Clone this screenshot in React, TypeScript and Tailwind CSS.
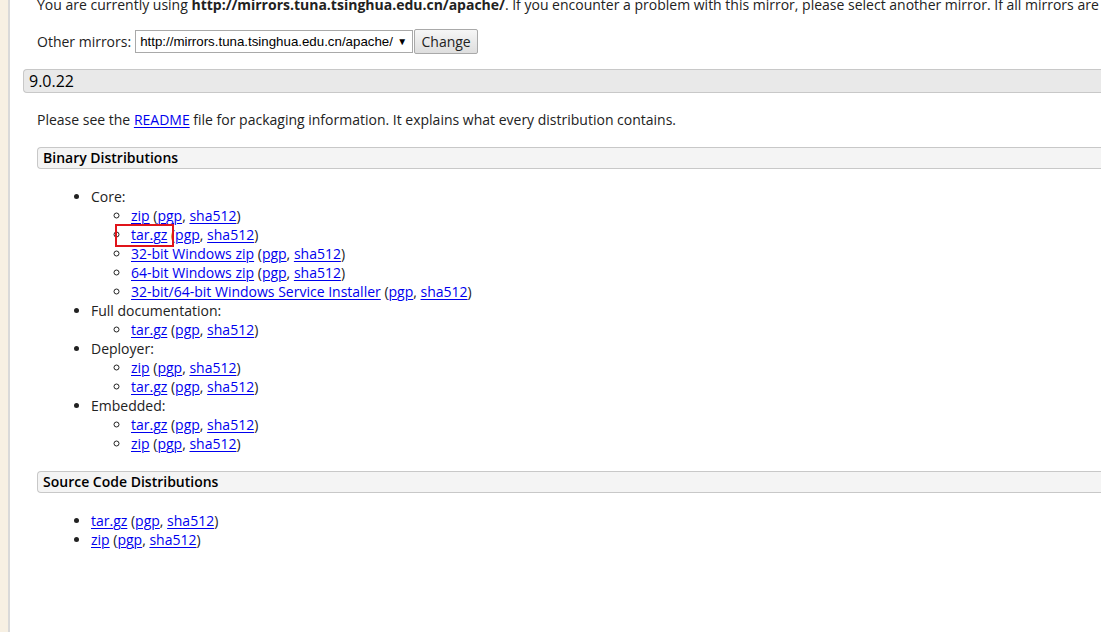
import React from "react"

type Dl = { label: string; name?: string }

const L = ({ children }: { children: React.ReactNode }) => (
  <a href="#" className="text-[#0000ee] underline underline-offset-[2px] decoration-[1px]">
    {children}
  </a>
)

// un lien de téléchargement avec ses signatures
const Item = ({ label, boxed }: { label: string; boxed?: boolean }) => (
  <li className="relative">
    {boxed && (
      <span className="absolute left-[-16px] top-[-1px] h-[23px] w-[59px] border-2 border-[#e0141a]" />
    )}
    <L>{label}</L> (<L>pgp</L>, <L>sha512</L>)
  </li>
)

const groups: { title: string; items: Dl[] }[] = [
  {
    title: "Core:",
    items: [
      { label: "zip" },
      { label: "tar.gz", name: "boxed" },
      { label: "32-bit Windows zip" },
      { label: "64-bit Windows zip" },
      { label: "32-bit/64-bit Windows Service Installer" },
    ],
  },
  { title: "Full documentation:", items: [{ label: "tar.gz" }] },
  { title: "Deployer:", items: [{ label: "zip" }, { label: "tar.gz" }] },
  { title: "Embedded:", items: [{ label: "tar.gz" }, { label: "zip" }] },
]

export default function App() {
  return (
    <div
      className="flex h-[632px] w-[1101px] overflow-hidden text-[14px] leading-[19px] text-[#222]"
      style={{ fontFamily: '"Open Sans", "Noto Sans", sans-serif' }}
    >
      <div className="w-[8px] shrink-0 bg-[#f7f0e3]" />
      <div className="w-[2px] shrink-0 bg-[#d9d9d9]" />
      <div className="flex-1 min-w-0 bg-white">
        <div className="mt-[-5px] w-[1200px] pl-[13px]">
          <p className="pl-[14px] whitespace-nowrap">
            You are currently using <b>http://mirrors.tuna.tsinghua.edu.cn/apache/</b>. If you encounter a problem with
            this mirror, please select another mirror. If all mirrors are failing, there are backup mirrors
          </p>

          <div className="mt-[15px] flex items-center pl-[14px]">
            <span>Other mirrors:</span>
            <div
              className="ml-[4px] flex h-[23px] w-[278px] items-center justify-between border border-[#a9a9a9] bg-white pl-[4px] pr-[5px] text-[13.3px] text-black"
              style={{ fontFamily: '"Liberation Sans", Arial, sans-serif' }}
            >
              <span>http://mirrors.tuna.tsinghua.edu.cn/apache/</span>
              <span className="text-[10px]">▼</span>
            </div>
            <button className="ml-[1px] h-[25px] w-[64px] rounded-[2px] border border-[#a9a9a9] bg-gradient-to-b from-[#f6f6f6] to-[#dedede] text-[14px] text-[#222]">
              Change
            </button>
          </div>

          <div className="mt-[15px] flex h-[24px] items-center rounded-l-[4px] border border-r-0 border-[#c8c8c8] bg-[#e9e9e9] pl-[5px] text-[16px] text-black">
            9.0.22
          </div>

          <div className="pl-[14px]">
            <p className="mt-[17px]">
              Please see the <L>README</L> file for packaging information. It explains what every distribution contains.
            </p>

            <div className="mt-[18px] flex h-[22px] items-center rounded-l-[4px] border border-r-0 border-[#c8c8c8] bg-[#f4f4f4] pl-[5px] pb-[1px] text-[14px] font-semibold text-black">
              Binary Distributions
            </div>

            <ul className="mt-[18px] list-disc pl-[54px]">
              {groups.map((g) => (
                <li key={g.title}>
                  {g.title}
                  <ul className="list-[circle] pl-[40px]">
                    {g.items.map((it, i) => (
                      <Item key={i} label={it.label} boxed={it.name === "boxed"} />
                    ))}
                  </ul>
                </li>
              ))}
            </ul>

            <div className="mt-[18px] flex h-[22px] items-center rounded-l-[4px] border border-r-0 border-[#c8c8c8] bg-[#f4f4f4] pl-[5px] pb-[1px] text-[14px] font-semibold text-black">
              Source Code Distributions
            </div>

            <ul className="mt-[18px] list-disc pl-[54px]">
              <Item label="tar.gz" />
              <Item label="zip" />
            </ul>
          </div>
        </div>
      </div>
    </div>
  )
}
